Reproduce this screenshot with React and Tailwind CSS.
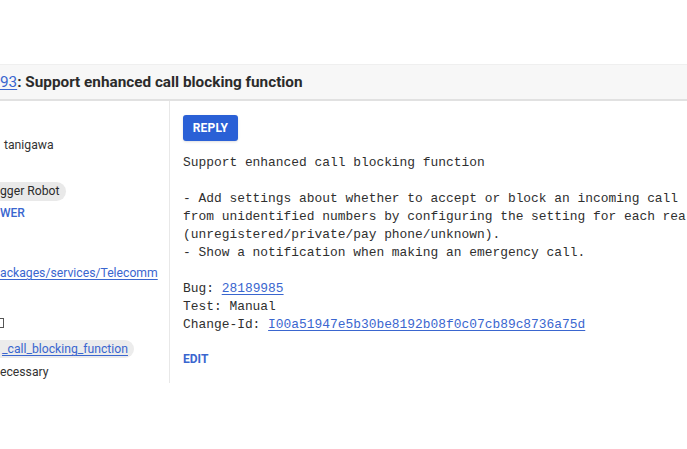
export default function App() {
  return (
    <div className="w-[687px] h-[449px] bg-white overflow-hidden font-['Roboto','Liberation_Sans',sans-serif] text-[#333]">
      {/* Header */}
      <div className="mt-16 h-[37px] bg-[#f7f7f7] border-t border-[#efefef] border-b-2 border-b-[#e1e1e1] flex items-center">
        <h1 className="text-[15.3px] font-bold text-[#2b2b2b] whitespace-nowrap">
          <a className="text-[#3a66cf] font-normal underline underline-offset-2">93</a>: Support enhanced call blocking function
        </h1>
      </div>

      <div className="flex h-[282px]">
        {/* Left info column */}
        <div className="w-[170px] shrink-0 border-r border-[#e8e8e8] text-[12.2px] whitespace-nowrap overflow-hidden">
          <div className="mt-[34px] h-5 leading-5 pl-[4px]">tanigawa</div>
          <div className="mt-[27px] h-[19px] flex">
            <span className="bg-[#e9e9e9] rounded-r-full pr-[6px] leading-[19px] text-[#2b2b2b]">gger Robot</span>
          </div>
          <div className="mt-[4px] h-4 leading-4 text-[12px] font-medium text-[#3a66cf]">WER</div>
          <div className="mt-[42px] h-5 leading-5">
            <a className="text-[#3a66cf] underline underline-offset-2">ackages/services/Telecomm</a>
          </div>
          <div className="mt-[30px] h-5 flex items-center">
            <span className="block w-[4px] h-[10px] border border-l-0 border-[#555]"></span>
          </div>
          <div className="mt-[7px] h-[18px] flex">
            <span className="bg-[#ececec] rounded-r-full pl-[2px] pr-[6px] leading-[18px]">
              <a className="text-[#3a66cf] underline underline-offset-2">_call_blocking_function</a>
            </span>
          </div>
          <div className="mt-[4px] h-5 leading-5">ecessary</div>
        </div>

        {/* Commit message */}
        <div className="flex-1 pl-[13px] pt-[14px] min-w-0 overflow-hidden">
          <button className="h-[26px] w-[55px] rounded-[3px] bg-[#2a60d6] text-white text-[12px] font-bold tracking-[0.2px] shadow-sm">
            REPLY
          </button>
          <pre className="mt-[13px] font-['Liberation_Mono',monospace] text-[12.9px] leading-[18px] text-[#2f2f2f] whitespace-pre">
{`Support enhanced call blocking function

- Add settings about whether to accept or block an incoming call
from unidentified numbers by configuring the setting for each rea
(unregistered/private/pay phone/unknown).
- Show a notification when making an emergency call.

`}Bug: <a className="text-[#3a66cf] underline underline-offset-2">28189985</a>{`
Test: Manual
Change-Id: `}<a className="text-[#3a66cf] underline underline-offset-2">I00a51947e5b30be8192b08f0c07cb89c8736a75d</a>
          </pre>
          <div className="mt-[18px] h-[14px] leading-[14px] text-[12px] font-bold text-[#3a66cf]">EDIT</div>
        </div>
      </div>
    </div>
  )
}
